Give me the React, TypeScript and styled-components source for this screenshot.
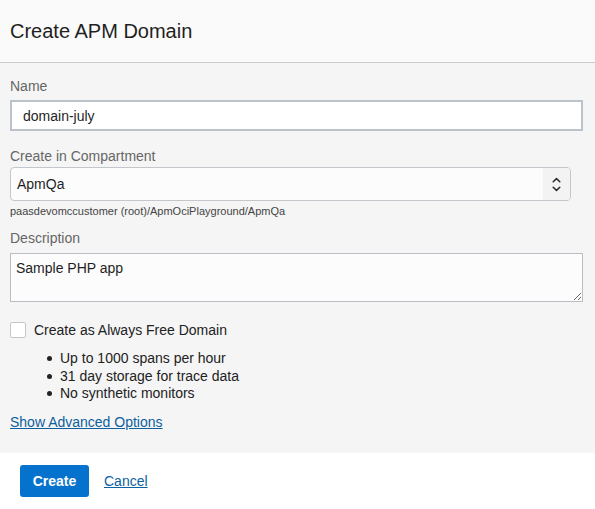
import styled, { createGlobalStyle } from 'styled-components';

const GlobalStyle = createGlobalStyle`
  *, *::before, *::after {
    box-sizing: border-box;
  }
  html, body {
    margin: 0;
    padding: 0;
    background: #ffffff;
  }
  body {
    font-family: 'Liberation Sans', Arial, sans-serif;
    color: #161513;
  }
`;

const Panel = styled.div`
  width: 595px;
  height: 509px;
  display: flex;
  flex-direction: column;
  overflow: hidden;
`;

const Header = styled.div`
  height: 63px;
  flex-shrink: 0;
  display: flex;
  align-items: center;
  padding-left: 10px;
  background: #fafafa;
  border-bottom: 1px solid #c9cbce;
`;

const Title = styled.h1`
  margin: 0;
  font-size: 20px;
  font-weight: 400;
  color: #1f1f1f;
`;

const Body = styled.div`
  flex: 1;
  display: flex;
  flex-direction: column;
  background: #f5f5f5;
  padding: 15px 12px 0 10px;
`;

const Label = styled.label<{ $gap: number; $top?: number }>`
  display: block;
  font-size: 14px;
  line-height: 17px;
  color: #666666;
  margin-top: ${(p) => p.$top ?? 0}px;
  margin-bottom: ${(p) => p.$gap}px;
`;

const TextInput = styled.input`
  width: 100%;
  height: 31px;
  padding: 0 11px;
  font-family: inherit;
  font-size: 14px;
  color: #1f1f1f;
  background: #ffffff;
  border: 2px solid #bcc2c9;
  border-radius: 0;
  outline: none;
`;

const SelectBox = styled.div`
  width: 561px;
  height: 34px;
  display: flex;
  align-items: stretch;
  background: #fcfcfc;
  border: 1px solid #c3c7cc;
  border-radius: 4px;
  overflow: hidden;
`;

const SelectValue = styled.div`
  flex: 1;
  display: flex;
  align-items: center;
  padding-left: 6px;
  font-size: 14px;
  color: #1f1f1f;
`;

const SelectArrows = styled.div`
  width: 27px;
  display: flex;
  align-items: center;
  justify-content: center;
  background: #f3f3f3;
`;

const PathHint = styled.div`
  margin-top: 4px;
  font-size: 11px;
  line-height: 13px;
  color: #444444;
`;

const TextArea = styled.textarea`
  display: block;
  width: 100%;
  height: 49px;
  padding: 5px 5px;
  font-family: inherit;
  font-size: 14px;
  line-height: 18px;
  color: #1f1f1f;
  background: #fcfcfc;
  border: 1px solid #b8bec4;
  border-radius: 0;
  outline: none;
`;

const CheckRow = styled.div`
  margin-top: 20px;
  display: flex;
  align-items: center;
  gap: 8px;
  height: 16px;
`;

const CheckBox = styled.span`
  width: 16px;
  height: 16px;
  border: 1px solid #c6c6c6;
  border-radius: 2px;
  background: #ffffff;
`;

const CheckText = styled.span`
  font-size: 14px;
  color: #222222;
`;

const Perks = styled.ul`
  list-style: none;
  margin: 12px 0 0;
  padding: 0 0 0 37px;
`;

const Perk = styled.li`
  display: flex;
  align-items: center;
  gap: 8px;
  font-size: 14px;
  line-height: 17.5px;
  color: #222222;

  &::before {
    content: '';
    width: 5px;
    height: 5px;
    border-radius: 50%;
    background: #222222;
  }
`;

const Link = styled.a`
  font-size: 14px;
  line-height: 17px;
  color: #0d5f9e;
  text-decoration: underline;
  cursor: pointer;
`;

const AdvancedLink = styled(Link)`
  display: block;
  margin-top: 11px;
  align-self: flex-start;
`;

const Footer = styled.div`
  height: 56px;
  flex-shrink: 0;
  display: flex;
  align-items: flex-start;
  gap: 15px;
  padding: 12px 0 0 20px;
  background: #ffffff;
`;

const PrimaryButton = styled.button`
  width: 69px;
  height: 32px;
  border: none;
  border-radius: 3px;
  background: #0572ce;
  color: #ffffff;
  font-family: inherit;
  font-size: 14px;
  font-weight: 700;
  cursor: pointer;
`;

const CancelLink = styled(Link)`
  line-height: 32px;
`;

function UpDown() {
  return (
    <svg width="9" height="15" viewBox="0 0 9 15" fill="none" stroke="#2b2b2b" strokeWidth="1.5" strokeLinecap="round" strokeLinejoin="round">
      <path d="M1.2 4.8 4.5 1.6 7.8 4.8" />
      <path d="M1.2 10.2 4.5 13.4 7.8 10.2" />
    </svg>
  );
}

export default function App() {
  return (
    <Panel>
      <GlobalStyle />
      <Header>
        <Title>Create APM Domain</Title>
      </Header>
      <Body>
        <Label $gap={5}>Name</Label>
        <TextInput defaultValue="domain-july" />

        <Label $top={17} $gap={2}>Create in Compartment</Label>
        <SelectBox>
          <SelectValue>ApmQa</SelectValue>
          <SelectArrows>
            <UpDown />
          </SelectArrows>
        </SelectBox>
        <PathHint>paasdevomccustomer (root)/ApmOciPlayground/ApmQa</PathHint>

        <Label $top={12} $gap={6}>Description</Label>
        <TextArea defaultValue="Sample PHP app" />

        <CheckRow>
          <CheckBox />
          <CheckText>Create as Always Free Domain</CheckText>
        </CheckRow>
        <Perks>
          <Perk>Up to 1000 spans per hour</Perk>
          <Perk>31 day storage for trace data</Perk>
          <Perk>No synthetic monitors</Perk>
        </Perks>

        <AdvancedLink>Show Advanced Options</AdvancedLink>
      </Body>
      <Footer>
        <PrimaryButton>Create</PrimaryButton>
        <CancelLink>Cancel</CancelLink>
      </Footer>
    </Panel>
  );
}
